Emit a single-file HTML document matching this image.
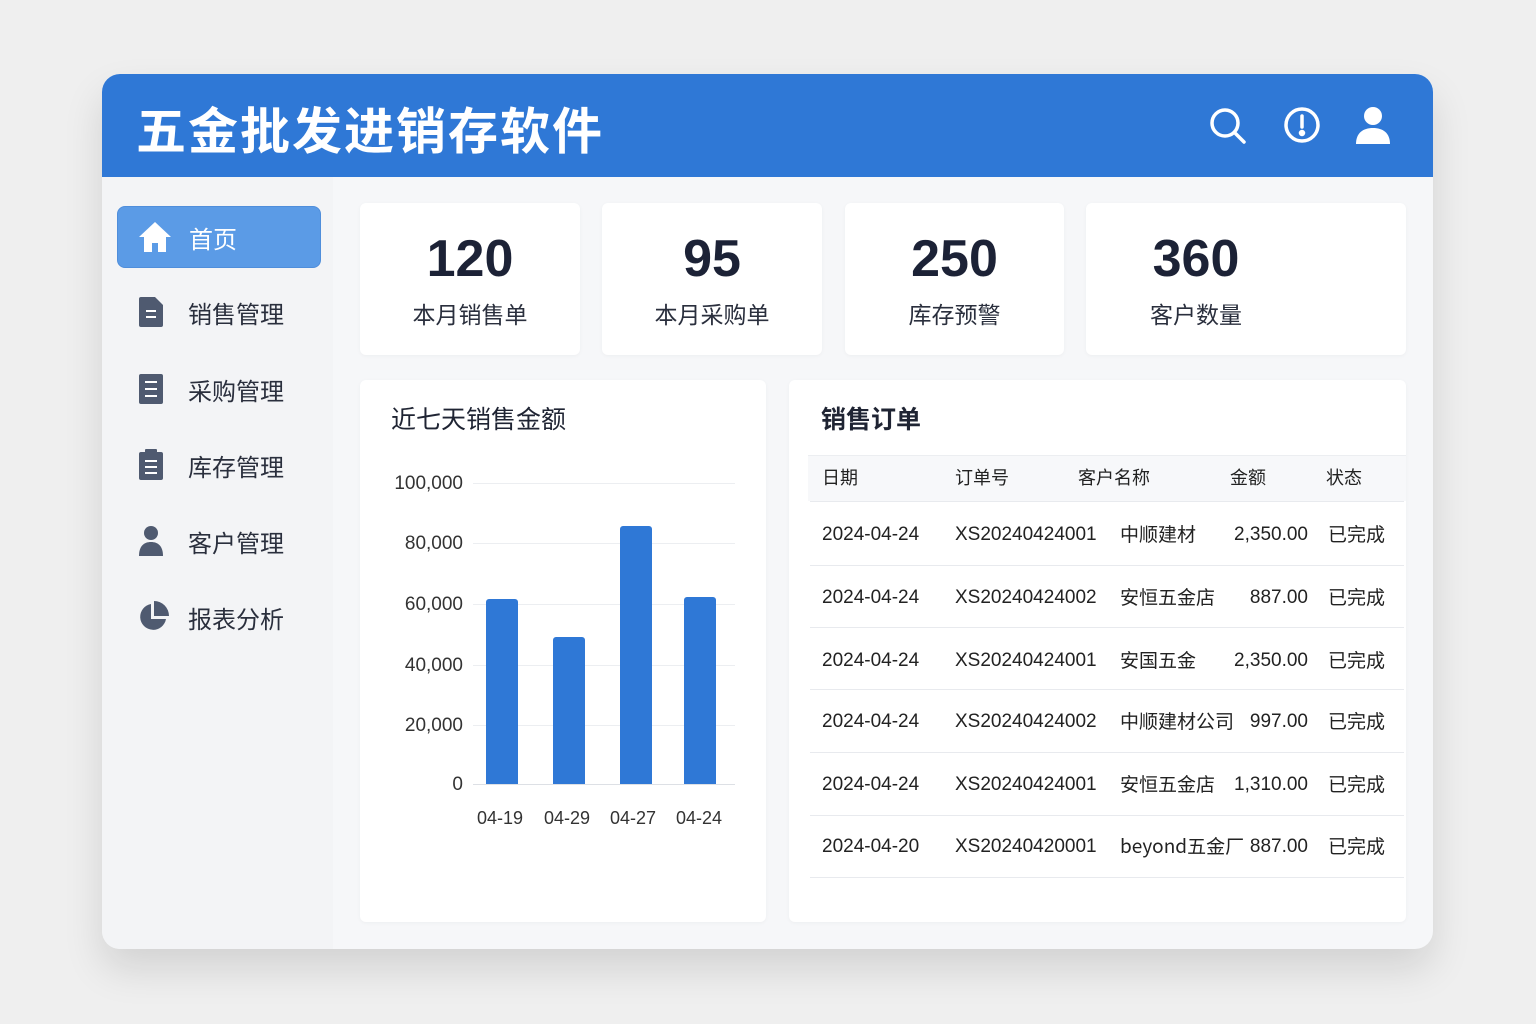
<!DOCTYPE html>
<html><head><meta charset="utf-8"><style>
*{margin:0;padding:0;box-sizing:border-box}
body{width:1536px;height:1024px;background:#efefef;font-family:"Liberation Sans","Noto Sans CJK SC",sans-serif;position:relative;overflow:hidden;color:#1f2433}
.abs{position:absolute}
.card{position:absolute;left:102px;top:74px;width:1331px;height:875px;border-radius:18px;background:#f6f7f9;overflow:hidden;box-shadow:0 20px 40px rgba(0,0,0,.12)}
.hdr{position:absolute;left:0;top:0;width:100%;height:103px;background:#2f78d6}
.title{position:absolute;left:34px;top:18px;font-size:50px;font-weight:bold;color:#fff;letter-spacing:2px;font-family:"Noto Sans CJK SC",sans-serif}
.side{position:absolute;left:0;top:103px;width:231px;height:772px;background:#f3f4f6}
.nav{position:absolute;left:15px;width:204px;height:62px;font-size:24px;color:#2a2f3d;font-family:"Noto Sans CJK SC",sans-serif}
.nav span{position:absolute;left:71px;top:13px}
.nav svg{position:absolute;left:20px;top:14px}
.act{background:#5b9be6;border-radius:8px;color:#fff;border:1px solid #4f8edb}
.box{position:absolute;background:#fff;border-radius:6px;box-shadow:0 1px 4px rgba(0,0,0,.04)}
.num{position:absolute;width:100%;text-align:center;top:26px;font-size:52px;font-weight:bold;color:#1c2236}
.lbl{position:absolute;width:100%;text-align:center;top:93px;font-size:23px;color:#2a2f3d;font-family:"Noto Sans CJK SC",sans-serif}
.yl{position:absolute;right:1073px;font-size:19px;color:#333;text-align:right}
.gl{position:absolute;left:473px;width:262px;height:1px;background:#eceef1}
.bar{position:absolute;background:#2f78d6;border-radius:3px 3px 0 0;width:32px}
.xl{position:absolute;top:808px;font-size:18px;color:#333}
.tr{position:absolute;left:810px;width:594px;height:1px;background:#e8eaee}
.td{position:absolute;font-size:19px;color:#222;line-height:24px;height:24px;font-family:"Liberation Sans","Noto Sans CJK SC",sans-serif}
.c{font-family:"Noto Sans CJK SC",sans-serif;font-size:19px;line-height:24px}
</style></head><body>
<div class="card">
<div class="hdr"><div class="title">五金批发进销存软件</div>
<svg class="abs" style="left:1106px;top:32px" width="40" height="40" viewBox="0 0 40 40" fill="none" stroke="#fff" stroke-width="3.5"><circle cx="17" cy="17" r="13"/><path d="M27 27l9 9" stroke-linecap="round"/></svg>
<svg class="abs" style="left:1181px;top:32px" width="38" height="38" viewBox="0 0 38 38" fill="none" stroke="#fff" stroke-width="3.5"><circle cx="19" cy="19" r="16"/><path d="M19 10v11" stroke-linecap="round"/><circle cx="19" cy="27" r="1.5" fill="#fff"/></svg>
<svg class="abs" style="left:1253px;top:32px" width="36" height="38" viewBox="0 0 36 38" fill="#fff"><circle cx="18" cy="10" r="9"/><path d="M1 38c0-11 7-16 17-16s17 5 17 16z"/></svg>
</div>
<div class="side">
<div class="nav act" style="top:29px"><svg width="34" height="32" viewBox="0 0 34 32" fill="#fff"><path d="M17 1L1 16h5v15h8v-9h6v9h8V16h5z"/></svg><span>首页</span></div>
<div class="nav" style="top:105px"><svg width="28" height="32" viewBox="0 0 28 32"><path d="M2 3a2 2 0 012-2h14l8 8v20a2 2 0 01-2 2H4a2 2 0 01-2-2z" fill="#4f5a70"/><path d="M9 15h10M9 21h10" stroke="#fff" stroke-width="2"/></svg><span>销售管理</span></div>
<div class="nav" style="top:182px"><svg width="28" height="32" viewBox="0 0 28 32"><rect x="2" y="1" width="24" height="30" rx="2" fill="#4f5a70"/><path d="M8 9h12M8 16h12M8 23h12" stroke="#fff" stroke-width="2"/></svg><span>采购管理</span></div>
<div class="nav" style="top:258px"><svg width="28" height="32" viewBox="0 0 28 32"><rect x="2" y="3" width="24" height="28" rx="2" fill="#4f5a70"/><rect x="8" y="0" width="12" height="5" rx="1" fill="#4f5a70"/><path d="M8 12h12M8 18h12M8 24h12" stroke="#fff" stroke-width="2"/></svg><span>库存管理</span></div>
<div class="nav" style="top:334px"><svg width="28" height="32" viewBox="0 0 28 32" fill="#4f5a70"><circle cx="14" cy="8" r="7"/><path d="M2 31c0-10 5-14 12-14s12 4 12 14z"/></svg><span>客户管理</span></div>
<div class="nav" style="top:410px"><svg width="32" height="32" viewBox="0 0 32 32" fill="#4f5a70"><path d="M14 3A13 13 0 1029 18H14z"/><path d="M17 0v15h15A15 15 0 0017 0z"/></svg><span>报表分析</span></div>
</div>
</div>
<div class="box" style="left:360px;top:203px;width:220px;height:152px"><div class="num">120</div><div class="lbl">本月销售单</div></div>
<div class="box" style="left:602px;top:203px;width:220px;height:152px"><div class="num">95</div><div class="lbl">本月采购单</div></div>
<div class="box" style="left:845px;top:203px;width:219px;height:152px"><div class="num">250</div><div class="lbl">库存预警</div></div>
<div class="box" style="left:1086px;top:203px;width:320px;height:152px"><div class="num" style="width:220px">360</div><div class="lbl" style="width:220px">客户数量</div></div>

<div class="box" style="left:360px;top:380px;width:406px;height:542px"></div>
<div class="abs" style="left:391px;top:400px;font-size:25px;font-family:'Noto Sans CJK SC',sans-serif">近七天销售金额</div>
<div class="gl" style="top:483px"></div><div class="gl" style="top:543px"></div><div class="gl" style="top:604px"></div><div class="gl" style="top:665px"></div><div class="gl" style="top:725px"></div><div class="gl" style="top:784px;background:#dde0e5"></div>
<div class="yl" style="top:473px">100,000</div><div class="yl" style="top:533px">80,000</div><div class="yl" style="top:594px">60,000</div><div class="yl" style="top:655px">40,000</div><div class="yl" style="top:715px">20,000</div><div class="yl" style="top:774px">0</div>
<div class="bar" style="left:486px;top:599px;height:185px"></div>
<div class="bar" style="left:553px;top:637px;height:147px"></div>
<div class="bar" style="left:620px;top:526px;height:258px"></div>
<div class="bar" style="left:684px;top:597px;height:187px"></div>
<div class="xl" style="left:477px">04-19</div><div class="xl" style="left:544px">04-29</div><div class="xl" style="left:610px">04-27</div><div class="xl" style="left:676px">04-24</div>

<div class="box" style="left:789px;top:380px;width:617px;height:542px"></div>
<div class="abs" style="left:821px;top:400px;font-size:25px;font-weight:bold;font-family:'Noto Sans CJK SC',sans-serif">销售订单</div>
<div class="abs" style="left:808px;top:455px;width:598px;height:46px;background:#f7f8fa;border-top:1px solid #eceef1"></div>
<div class="td" style="left:822px;top:466px;font-size:18px">日期</div><div class="td" style="left:955px;top:466px;font-size:18px">订单号</div><div class="td" style="left:1078px;top:466px;font-size:18px">客户名称</div><div class="td" style="left:1230px;top:466px;font-size:18px">金额</div><div class="td" style="left:1326px;top:466px;font-size:18px">状态</div>
<div class="tr" style="top:501px"></div><div class="tr" style="top:565px"></div><div class="tr" style="top:627px"></div><div class="tr" style="top:689px"></div><div class="tr" style="top:752px"></div><div class="tr" style="top:815px"></div><div class="tr" style="top:877px"></div>

<div class="td" style="left:822px;top:523px">2024-04-24</div><div class="td" style="left:955px;top:523px">XS20240424001</div><div class="td c" style="left:1120px;top:522px">中顺建材</div><div class="td" style="right:228px;top:523px">2,350.00</div><div class="td c" style="left:1328px;top:522px">已完成</div>
<div class="td" style="left:822px;top:586px">2024-04-24</div><div class="td" style="left:955px;top:586px">XS20240424002</div><div class="td c" style="left:1120px;top:585px">安恒五金店</div><div class="td" style="right:228px;top:586px">887.00</div><div class="td c" style="left:1328px;top:585px">已完成</div>
<div class="td" style="left:822px;top:649px">2024-04-24</div><div class="td" style="left:955px;top:649px">XS20240424001</div><div class="td c" style="left:1120px;top:648px">安国五金</div><div class="td" style="right:228px;top:649px">2,350.00</div><div class="td c" style="left:1328px;top:648px">已完成</div>
<div class="td" style="left:822px;top:710px">2024-04-24</div><div class="td" style="left:955px;top:710px">XS20240424002</div><div class="td c" style="left:1120px;top:709px">中顺建材公司</div><div class="td" style="right:228px;top:710px">997.00</div><div class="td c" style="left:1328px;top:709px">已完成</div>
<div class="td" style="left:822px;top:773px">2024-04-24</div><div class="td" style="left:955px;top:773px">XS20240424001</div><div class="td c" style="left:1120px;top:772px">安恒五金店</div><div class="td" style="right:228px;top:773px">1,310.00</div><div class="td c" style="left:1328px;top:772px">已完成</div>
<div class="td" style="left:822px;top:835px">2024-04-20</div><div class="td" style="left:955px;top:835px">XS20240420001</div><div class="td c" style="left:1120px;top:834px">beyond五金厂</div><div class="td" style="right:228px;top:835px">887.00</div><div class="td c" style="left:1328px;top:834px">已完成</div>
</body></html>
